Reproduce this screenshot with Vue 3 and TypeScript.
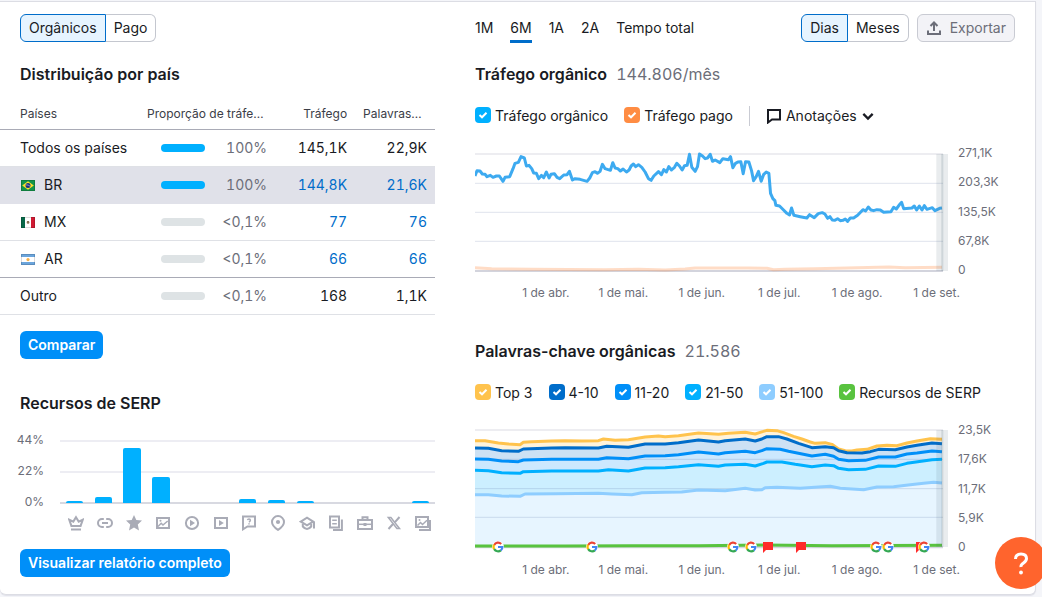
<script setup lang="ts">
import { ref } from 'vue'

type Point = [number, number]

interface CountryRow {
  name: string
  flag: string
  share: number
  shareLabel: string
  traffic: string
  keywords: string
  linked: boolean
}

interface LegendItem {
  id: string
  label: string
  color: string
}

const rows: CountryRow[] = [
  { name: 'Todos os países', flag: '', share: 100, shareLabel: '100%', traffic: '145,1K', keywords: '22,9K', linked: false },
  { name: 'BR', flag: 'br', share: 100, shareLabel: '100%', traffic: '144,8K', keywords: '21,6K', linked: true },
  { name: 'MX', flag: 'mx', share: 0, shareLabel: '<0,1%', traffic: '77', keywords: '76', linked: true },
  { name: 'AR', flag: 'ar', share: 0, shareLabel: '<0,1%', traffic: '66', keywords: '66', linked: true },
  { name: 'Outro', flag: '', share: 0, shareLabel: '<0,1%', traffic: '168', keywords: '1,1K', linked: false },
]

const source = ref('Orgânicos')
const granularity = ref('Dias')
const period = ref('6M')
const periods = ['1M', '6M', '1A', '2A', 'Tempo total']

const trafficLegend: LegendItem[] = [
  { id: 'organic', label: 'Tráfego orgânico', color: '#00b0ff' },
  { id: 'paid', label: 'Tráfego pago', color: '#ff8c43' },
]

const keywordLegend: LegendItem[] = [
  { id: 'top3', label: 'Top 3', color: '#ffc34d' },
  { id: 'k4', label: '4-10', color: '#006dca' },
  { id: 'k11', label: '11-20', color: '#008ff8' },
  { id: 'k21', label: '21-50', color: '#00b0ff' },
  { id: 'k51', label: '51-100', color: '#8ecdff' },
  { id: 'serp', label: 'Recursos de SERP', color: '#59c33f' },
]

const months = ['1 de abr.', '1 de mai.', '1 de jun.', '1 de jul.', '1 de ago.', '1 de set.']
const trafficTicks = ['271,1K', '203,3K', '135,5K', '67,8K', '0']
const keywordTicks = ['23,5K', '17,6K', '11,7K', '5,9K', '0']

const serpBars = [
  { icon: 'crown', height: 2 },
  { icon: 'link', height: 6 },
  { icon: 'star', height: 55 },
  { icon: 'image', height: 26 },
  { icon: 'play', height: 0 },
  { icon: 'video', height: 0 },
  { icon: 'question', height: 4 },
  { icon: 'pin', height: 3 },
  { icon: 'scholar', height: 2 },
  { icon: 'news', height: 0 },
  { icon: 'jobs', height: 0 },
  { icon: 'x', height: 0 },
  { icon: 'images', height: 2 },
]

const organic: Point[] = [
  [30, 108], [36, 92], [45, 93], [52, 102], [60, 103], [66, 110], [76, 106], [84, 112], [94, 108], [103, 108],
  [114, 124], [120, 112], [134, 110], [144, 86], [150, 70], [160, 67], [168, 50], [178, 54], [184, 78], [192, 76],
  [200, 86], [206, 99], [214, 100], [221, 116], [229, 106], [236, 113], [244, 96], [252, 114], [258, 103], [268, 101],
  [276, 112], [284, 116], [296, 105], [306, 104], [313, 94], [322, 120], [330, 116], [345, 118], [366, 124], [374, 114],
  [382, 98], [390, 95], [397, 100], [405, 94], [412, 73], [420, 86], [436, 91], [443, 68], [450, 84], [458, 86],
  [466, 93], [474, 87], [484, 96], [492, 90], [498, 78], [505, 72], [512, 80], [520, 74], [530, 82], [540, 96],
  [550, 116], [558, 121], [566, 108], [580, 95], [589, 104], [596, 89], [604, 96], [611, 80], [619, 90], [628, 82],
  [635, 70], [643, 78], [651, 90], [658, 77], [666, 76], [673, 43], [680, 82], [690, 94], [697, 80], [703, 42],
  [712, 48], [720, 56], [727, 54], [735, 43], [742, 64], [750, 60], [764, 68], [773, 56], [790, 59], [796, 50],
  [803, 83], [811, 70], [818, 66], [827, 65], [834, 101], [841, 65], [851, 66], [859, 92], [865, 122], [873, 110],
  [880, 94], [888, 124], [895, 104], [903, 96], [911, 100], [916, 160], [923, 176], [929, 182], [932, 196], [943, 198],
  [955, 210], [965, 220], [973, 225], [979, 204], [986, 226], [1005, 230], [1025, 234], [1033, 224], [1047, 233],
  [1059, 221], [1071, 218], [1079, 222], [1087, 235], [1094, 230], [1101, 240], [1109, 241], [1117, 236], [1125, 242],
  [1133, 241], [1140, 237], [1147, 244], [1155, 234], [1165, 234], [1177, 226], [1193, 209], [1201, 213], [1209, 201],
  [1217, 210], [1225, 212], [1235, 209], [1245, 210], [1255, 217], [1277, 215], [1285, 202], [1293, 207], [1301, 196],
  [1309, 187], [1315, 206], [1340, 204], [1347, 198], [1354, 210], [1362, 198], [1370, 210], [1377, 197], [1385, 208],
  [1401, 203], [1409, 212], [1423, 205], [1430, 204],
]

const paid: Point[] = [
  [30, 383], [80, 386], [200, 388], [420, 389], [520, 388], [600, 390], [660, 387], [690, 384], [850, 384],
  [905, 385], [925, 389], [960, 388], [1050, 386], [1270, 381], [1320, 383], [1430, 382],
]

const layers: { id: string; stroke: string; fill: string; points: Point[] }[] = [
  {
    id: 'top3', stroke: '#ffc34d', fill: '#fff3db',
    points: [
      [30, 320], [60, 320], [100, 327], [130, 330], [165, 332], [175, 325], [200, 323], [260, 321], [300, 320],
      [350, 321], [400, 320], [415, 315], [450, 319], [490, 317], [540, 309], [580, 306], [600, 308], [640, 305],
      [700, 297], [760, 301], [790, 298], [840, 295], [870, 300], [885, 295], [905, 289], [935, 290], [955, 296],
      [985, 307], [1010, 315], [1035, 324], [1050, 328], [1080, 326], [1100, 331], [1120, 345], [1140, 350],
      [1160, 351], [1175, 348], [1205, 346], [1235, 336], [1265, 334], [1295, 335], [1325, 327], [1355, 321],
      [1395, 314], [1430, 316],
    ],
  },
  {
    id: 'k4', stroke: '#006dca', fill: '#cce1f4',
    points: [
      [30, 342], [70, 343], [110, 350], [160, 352], [175, 345], [260, 342], [300, 341], [400, 342], [425, 337],
      [490, 340], [540, 330], [600, 330], [640, 326], [700, 318], [760, 324], [780, 320], [840, 315], [870, 321],
      [890, 315], [905, 308], [940, 308], [965, 315], [1000, 328], [1040, 341], [1080, 338], [1105, 341],
      [1120, 350], [1145, 356], [1190, 357], [1215, 353], [1240, 346], [1290, 347], [1325, 339], [1355, 334],
      [1400, 327], [1430, 329],
    ],
  },
  {
    id: 'k11', stroke: '#008ff8', fill: '#cce8fe',
    points: [
      [30, 375], [70, 376], [110, 381], [160, 383], [175, 378], [260, 376], [400, 376], [425, 371], [490, 374],
      [540, 366], [600, 365], [640, 362], [700, 354], [760, 360], [780, 356], [840, 352], [870, 356], [890, 350],
      [905, 344], [945, 346], [970, 352], [1040, 366], [1080, 361], [1105, 367], [1120, 376], [1150, 380],
      [1200, 379], [1240, 369], [1290, 369], [1325, 360], [1355, 357], [1400, 351], [1430, 353],
    ],
  },
  {
    id: 'k21', stroke: '#00b0ff', fill: '#ccefff',
    points: [
      [30, 409], [70, 410], [110, 416], [165, 418], [175, 413], [260, 411], [400, 411], [430, 407], [490, 411],
      [540, 402], [600, 401], [640, 398], [700, 392], [760, 397], [780, 393], [840, 391], [870, 396], [895, 388],
      [905, 384], [950, 384], [990, 391], [1040, 398], [1080, 393], [1105, 395], [1120, 403], [1150, 407],
      [1200, 406], [1240, 396], [1290, 397], [1325, 388], [1400, 377], [1430, 376],
    ],
  },
  {
    id: 'k51', stroke: '#8ecdff', fill: '#e7f5ff',
    points: [
      [30, 482], [70, 482], [110, 486], [165, 487], [180, 480], [270, 479], [400, 478], [440, 480], [500, 482],
      [530, 476], [600, 475], [650, 474], [700, 468], [780, 470], [840, 463], [870, 468], [890, 467], [900, 461],
      [935, 460], [1005, 463], [1060, 459], [1095, 457], [1125, 463], [1195, 467], [1235, 459], [1285, 458],
      [1335, 452], [1375, 448], [1405, 445], [1430, 447],
    ],
  },
]

const serpLine: Point[] = [[30, 636], [300, 636], [500, 635], [700, 635], [900, 633], [1100, 635], [1430, 634]]

// Notes on the keyword timeline; `at` is the share of the plot width.
const notes = [
  { kind: 'google', at: 4.9 },
  { kind: 'google', at: 24.8 },
  { kind: 'google', at: 54.5 },
  { kind: 'google', at: 58.3 },
  { kind: 'flag', at: 62 },
  { kind: 'flag', at: 69 },
  { kind: 'google', at: 84.7 },
  { kind: 'google', at: 87.4 },
  { kind: 'flag', at: 94.3 },
  { kind: 'google', at: 95 },
]

const line = (points: Point[]): string => points.map((p) => p.join(',')).join(' ')
const area = (points: Point[]): string => `30,638 ${line(points)} 1430,638`
</script>

<template>
  <main class="panel">
    <section class="left">
      <div class="inset toggle" role="group" aria-label="Tipo de tráfego">
        <button v-for="s in ['Orgânicos', 'Pago']" :key="s" type="button" :aria-pressed="source === s" @click="source = s">{{ s }}</button>
      </div>

      <h2 class="inset">Distribuição por país</h2>
      <table>
        <colgroup>
          <col class="c-name" /><col class="c-share" /><col class="c-traffic" /><col class="c-keywords" />
        </colgroup>
        <thead>
          <tr>
            <th>Países</th>
            <th>Proporção de tráfego</th>
            <th class="num">Tráfego</th>
            <th class="num">Palavras-chave</th>
          </tr>
        </thead>
        <tbody>
          <tr v-for="r in rows" :key="r.name" :class="{ selected: r.name === 'BR', strong: r.name === 'AR' }">
            <td>
              <span class="country">
                <svg v-if="r.flag === 'br'" class="flag" viewBox="0 0 14 11">
                  <rect width="14" height="11" fill="#12954a" />
                  <path d="M7 1.2 12.8 5.5 7 9.8 1.2 5.5z" fill="#ffdf2b" />
                  <circle cx="7" cy="5.5" r="2.5" fill="#1d2f7c" />
                  <path d="M4.8 4.9q2.4-.4 4.4 1.4" fill="none" stroke="#cfd8e8" stroke-width=".6" />
                  <rect x=".5" y=".5" width="13" height="10" fill="none" stroke="#000" stroke-opacity=".16" />
                </svg>
                <svg v-else-if="r.flag === 'mx'" class="flag" viewBox="0 0 14 11">
                  <rect width="14" height="11" fill="#fff" />
                  <rect width="4" height="11" fill="#086848" />
                  <rect x="10" width="4" height="11" fill="#d01a33" />
                  <path d="M6 4h2l.5 2L7 7 5.6 6z" fill="#8b7355" />
                  <rect x=".5" y=".5" width="13" height="10" fill="none" stroke="#000" stroke-opacity=".14" />
                </svg>
                <svg v-else-if="r.flag === 'ar'" class="flag" viewBox="0 0 14 11">
                  <rect width="14" height="11" fill="#fff" />
                  <rect width="14" height="3" fill="#6ba5dc" />
                  <rect y="8" width="14" height="3" fill="#6ba5dc" />
                  <circle cx="7" cy="5.6" r="1.6" fill="#f5b04a" />
                  <rect x=".5" y=".5" width="13" height="10" fill="none" stroke="#000" stroke-opacity=".14" />
                </svg>
                {{ r.name }}
              </span>
            </td>
            <td>
              <span class="share">
                <span class="meter"><span class="meter-fill" :style="{ width: r.share + '%' }"></span></span>
                <span class="share-label">{{ r.shareLabel }}</span>
              </span>
            </td>
            <td class="num"><a v-if="r.linked" href="#">{{ r.traffic }}</a><template v-else>{{ r.traffic }}</template></td>
            <td class="num"><a v-if="r.linked" href="#">{{ r.keywords }}</a><template v-else>{{ r.keywords }}</template></td>
          </tr>
        </tbody>
      </table>
      <div class="inset action"><button type="button" class="primary">Comparar</button></div>

      <h2 class="inset serp-title">Recursos de SERP</h2>
      <div class="serp">
        <div class="serp-axis"><span>44%</span><span>22%</span><span>0%</span></div>
        <div class="serp-body">
          <div class="serp-plot">
            <span v-for="b in serpBars" :key="b.icon" class="bar" :style="{ height: b.height + 'px' }"></span>
          </div>
          <div class="serp-icons">
            <svg v-for="b in serpBars" :key="b.icon" viewBox="0 0 16 16" class="icon">
              <template v-if="b.icon === 'crown'">
                <path d="M8 2.2 10.7 6.6 14.8 4.6 12.6 10.9H3.4L1.2 4.6 5.3 6.6z" class="o" />
                <path d="M3 14.5h10" class="o" />
              </template>
              <template v-else-if="b.icon === 'link'">
                <path d="M6.8 4H5a4 4 0 0 0 0 8h1.8M9.2 4H11a4 4 0 0 1 0 8H9.2M5 8h6" class="o" />
              </template>
              <path v-else-if="b.icon === 'star'" d="M8 0 10.3 5 16 5.6 11.8 9.4 13 15.5 8 12.5 3 15.5 4.2 9.4 0 5.6 5.7 5z" class="f" />
              <template v-else-if="b.icon === 'image'">
                <rect x="2" y="3" width="12" height="10" class="o" />
                <path d="M3 11.500 6.200 8.200 8 10 12.700 6" class="mid" /><circle cx="5.500" cy="5.800" r="1" class="f" />
              </template>
              <template v-else-if="b.icon === 'play'">
                <circle cx="8" cy="8" r="6.1" class="o" /><path d="M6 4.8 11 8 6 11.2z" class="f" />
              </template>
              <template v-else-if="b.icon === 'video'">
                <rect x="2" y="3" width="12" height="10" class="o" /><path d="M6 5 10.8 8 6 11z" class="f" />
              </template>
              <template v-else-if="b.icon === 'question'">
                <path d="M2 1.5h12v10H6.5L2 14.3z" class="o" />
                <path d="M6.500 5.200Q6.700 4 8 4q1.400 0 1.400 1.200Q9.400 6 8 7.200M8 8.300v1.200" class="mid" />
              </template>
              <template v-else-if="b.icon === 'pin'">
                <path d="M8 1.1a6 6 0 0 1 6 6c0 3-2.5 5.6-6 7.8-3.5-2.2-6-4.8-6-7.8a6 6 0 0 1 6-6z" class="o" />
                <circle cx="8" cy="7" r="2.1" class="f" />
              </template>
              <template v-else-if="b.icon === 'scholar'">
                <path d="M1.800 6.600 8 2.600 14.200 6.600 8 10.400z" class="o" />
                <path d="M15 7v6.500M3.800 9v2.500Q8 16.500 12.200 11.500V9" class="o" />
              </template>
              <template v-else-if="b.icon === 'news'">
                <path d="M2 1.500h9v11H2zM13.900 4.500v10.400H5" class="o" />
                <path d="M4.200 5.300h4.600M4.200 8.700h4.600" class="mid" />
              </template>
              <template v-else-if="b.icon === 'jobs'">
                <path d="M1 5h14v9H1zM5.500 5V2.200h5V5" class="o" />
                <path d="M1 9.300h14" class="mid" /><rect x="6.500" y="8" width="3" height="3" class="f" />
              </template>
              <template v-else-if="b.icon === 'x'">
                <path d="M2.300 2.500h2.600l8.600 11h-2.600z" class="mid" />
                <path d="M13.500 2 9 7.200M7 9 2.500 14" class="o" />
              </template>
              <template v-else>
                <path d="M1 2h12v10H1zM15 5v9.900H4" class="o" />
                <path d="M2.500 10.500 5.500 7.500 7.500 9.500 12 5.300" class="mid" /><circle cx="4.500" cy="5" r="1" class="f" />
              </template>
            </svg>
          </div>
        </div>
      </div>
      <div class="inset report"><button type="button" class="primary">Visualizar relatório completo</button></div>
    </section>

    <section class="right">
      <div class="toolbar">
        <nav class="periods" aria-label="Período">
          <button v-for="p in periods" :key="p" type="button" :class="{ active: period === p }" @click="period = p">{{ p }}</button>
        </nav>
        <div class="toggle" role="group" aria-label="Granularidade">
          <button v-for="g in ['Dias', 'Meses']" :key="g" type="button" :aria-pressed="granularity === g" @click="granularity = g">{{ g }}</button>
        </div>
        <button type="button" class="export">
          <svg viewBox="0 0 16 16" class="export-icon"><path d="M8 11V2.500M4.500 6 8 2.500 11.500 6M2 10.500V14h12v-3.500" /></svg>
          Exportar
        </button>
      </div>

      <h2>Tráfego orgânico <span class="figure">144.806/mês</span></h2>
      <div class="legend">
        <label v-for="l in trafficLegend" :key="l.id"><input type="checkbox" checked :style="{ backgroundColor: l.color }" />{{ l.label }}</label>
        <button type="button" class="annotations">
          <svg viewBox="0 0 16 16" class="note-icon"><path d="M2 2h12v9.500H6L2 14.500z" /></svg>
          Anotações
          <svg viewBox="0 0 12 12" class="chevron"><path d="M2 4.200 6 8.200 10 4.200" /></svg>
        </button>
      </div>
      <div class="chart">
        <div class="plot">
          <svg viewBox="30 15 1418 399" preserveAspectRatio="none" role="img" aria-label="Tráfego orgânico por dia">
            <path d="M30 42H1433" class="edge light" />
            <path d="M30 130H1433M30 217H1433M30 304H1433" class="rule" />
            <path d="M30 393H1433" class="edge" />
            <polyline :points="line(paid)" class="paid" />
            <polyline :points="line(organic)" class="organic" />
            <rect x="1413" y="42" width="35" height="351" class="band" />
            <rect x="1428" y="42" width="6" height="351" class="band-core" />
          </svg>
        </div>
        <div class="ticks"><span v-for="t in trafficTicks" :key="t">{{ t }}</span></div>
      </div>
      <div class="months"><span v-for="m in months" :key="m">{{ m }}</span></div>

      <h2 class="keywords-title">Palavras-chave orgânicas <span class="figure">21.586</span></h2>
      <div class="legend">
        <label v-for="l in keywordLegend" :key="l.id"><input type="checkbox" checked :style="{ backgroundColor: l.color }" />{{ l.label }}</label>
      </div>
      <div class="chart">
        <div class="plot">
          <svg viewBox="30 264 1418 399" preserveAspectRatio="none" role="img" aria-label="Palavras-chave orgânicas por posição">
            <path d="M30 288H1433" class="edge light" />
            <polygon v-for="l in layers" :key="l.id" :points="area(l.points)" :fill="l.fill" />
            <path d="M30 376H1433M30 464H1433M30 550H1433" class="rule" />
            <path d="M30 640H1433" class="edge" />
            <polyline v-for="l in layers" :key="l.id" :points="line(l.points)" :stroke="l.stroke" class="series" />
            <polyline :points="line(serpLine)" class="serp-line" />
            <rect x="1413" y="288" width="35" height="351" class="band" />
            <rect x="1428" y="288" width="6" height="351" class="band-core" />
          </svg>
          <svg v-for="n in notes" :key="n.at" viewBox="0 0 12 12" class="note" :style="{ left: n.at + '%' }">
            <template v-if="n.kind === 'google'">
              <circle cx="6" cy="6" r="6" fill="#fff" />
              <g fill="none" stroke-width="2.2">
                <path d="M9.2 2.900A4.400 4.400 0 0 0 2.200 3.900" stroke="#ea4335" />
                <path d="M2.200 3.800a4.400 4.400 0 0 0 0 4.400" stroke="#fbbc05" />
                <path d="M2.200 8.100A4.400 4.400 0 0 0 8.900 9.300" stroke="#34a853" />
                <path d="M8.800 9.400A4.400 4.400 0 0 0 10.400 6H6" stroke="#4285f4" />
              </g>
            </template>
            <path v-else d="M1 1h10v8H4l-3 3z" fill="#ff2b2b" />
          </svg>
        </div>
        <div class="ticks"><span v-for="t in keywordTicks" :key="t">{{ t }}</span></div>
      </div>
      <div class="months"><span v-for="m in months" :key="m">{{ m }}</span></div>
    </section>

    <button type="button" class="help" aria-label="Ajuda">
      <svg viewBox="0 0 26 26"><path d="M7.500 9Q7.500 4 13 4t5.500 4.600Q18.500 11 15.500 13T13 17" /><circle cx="13" cy="22.500" r="1.900" /></svg>
    </button>
  </main>
</template>

<style>
body {
  background: #f4f5f9;
}
</style>

<style scoped>
.panel {
  display: grid;
  grid-template-columns: minmax(0, 435fr) minmax(0, 540fr);
  column-gap: 40px;
  margin: 1px 6px 2px 0;
  padding: 12px 20px 16px 0;
  background: #fff;
  border: 1px solid #dcdde4;
  border-left: 0;
  border-radius: 0 0 6px 6px;
  box-shadow: 0 1px 1px #e0e1e9;
  color: #191b23;
  font: 14px/20px Inter, "Liberation Sans", sans-serif;
}

.inset {
  margin-left: 20px;
}

button {
  font: inherit;
  color: inherit;
  cursor: pointer;
}

h2 {
  margin: 20px 0 0;
  font-size: 16px;
  line-height: 24px;
  font-weight: 600;
}

.left h2 {
  margin-left: 20px;
}

.figure {
  margin-left: 5px;
  color: #6c6e79;
  font-weight: 400;
  font-variant-numeric: tabular-nums;
}

.toggle {
  display: flex;
}

.toggle button {
  height: 28px;
  padding: 0 8px;
  background: #fff;
  border: 1px solid #c4c7cf;
}

.toggle button:first-child {
  border-radius: 6px 0 0 6px;
}

.toggle button:last-child {
  border-left: 0;
  border-radius: 0 6px 6px 0;
}

.toggle button[aria-pressed="true"] {
  background: #e6f4ff;
  border: 1px solid #006dca;
}

table {
  width: 100%;
  margin-top: 12px;
  table-layout: fixed;
  border-collapse: separate;
  border-spacing: 0;
}

.c-name {
  width: 33.8%;
}

.c-share {
  width: 27.6%;
}

.c-traffic {
  width: 18.4%;
}

.c-keywords {
  width: 20.2%;
}

th {
  height: 31px;
  padding: 0;
  border-bottom: 1px solid #a9abb6;
  font-size: 12px;
  line-height: 16px;
  font-weight: 400;
  text-align: left;
  overflow: hidden;
  text-overflow: ellipsis;
  white-space: nowrap;
  color: #3b3d47;
}

td {
  height: 36px;
  padding: 0;
  border-bottom: 1px solid #dfe1e6;
}

th:first-child,
td:first-child {
  padding-left: 20px;
}

th.num,
td.num {
  text-align: right;
}

td.num {
  font-variant-numeric: tabular-nums;
}

th:last-child,
td:last-child {
  padding-right: 8px;
  padding-left: 16px;
}

.selected td {
  background: #e0e1e9;
  border-color: #e0e1e9;
}

.strong td {
  border-color: #a9abb6;
}

td a {
  color: #006dca;
  text-decoration: none;
}

.country {
  display: flex;
  align-items: center;
  gap: 9px;
}

.flag {
  width: 14px;
  height: 11px;
  margin-left: 1px;
}

.share {
  display: flex;
  align-items: center;
  justify-content: space-between;
  padding-left: 14px;
}

.meter {
  width: 44px;
  height: 8px;
  border-radius: 4px;
  background: #dee3e5;
  overflow: hidden;
}

.meter-fill {
  display: block;
  height: 100%;
  background: #00b0ff;
}

.share-label {
  color: #6c6e79;
  font-variant-numeric: tabular-nums;
}

.action {
  margin-top: 16px;
}

.primary {
  display: block;
  height: 28px;
  padding: 0 8px;
  border: 0;
  border-radius: 6px;
  background: #008ff8;
  color: #fff;
  font-weight: 600;
}

.serp-title {
  margin-top: 32px;
}

.serp {
  display: flex;
  gap: 16px;
  margin-top: 17px;
}

.serp-axis {
  display: flex;
  flex-direction: column;
  justify-content: space-between;
  width: 44px;
  height: 78px;
  color: #6c6e79;
  font-size: 12px;
  line-height: 16px;
  text-align: right;
}

.serp-body {
  flex: 1;
  padding-top: 8px;
}

.serp-plot,
.serp-icons {
  display: grid;
  grid-template-columns: repeat(13, 1fr);
  justify-items: center;
}

.serp-plot {
  height: 63px;
  padding-bottom: 1px;
  align-items: end;
  background:
    linear-gradient(#ededf3, #ededf3) 0 0 / 100% 2px no-repeat,
    linear-gradient(#ededf3, #ededf3) 0 31px / 100% 2px no-repeat,
    linear-gradient(#d8d9e1, #d8d9e1) 0 62px / 100% 2px no-repeat;
}

.bar {
  width: 60%;
  border-radius: 2px 2px 0 0;
  background: #00b0ff;
}

.serp-icons {
  margin: 11px -2px 0 2px;
}

.icon {
  width: 16px;
  height: 16px;
}

.icon .o {
  fill: none;
  stroke: #a9abb6;
  stroke-width: 2;
}

.icon .mid {
  fill: none;
  stroke: #a9abb6;
  stroke-width: 1.5;
}

.icon .f {
  fill: #a9abb6;
}

.report {
  margin-top: 18px;
}

.toolbar {
  display: flex;
  gap: 8px;
  height: 28px;
}

.periods {
  display: flex;
  flex: 1;
  gap: 17px;
}

.periods button {
  height: 29px;
  padding: 2px 0 0;
  border: 0;
  border-bottom: 3px solid transparent;
  background: none;
}

.periods .active {
  border-bottom-color: #006dca;
}

.export {
  display: flex;
  align-items: center;
  gap: 8px;
  height: 28px;
  padding: 0 8px;
  border: 1px solid #c9cbd3;
  border-radius: 6px;
  background: #f3f3f7;
  color: #6c6e79;
}

.export-icon {
  width: 16px;
  height: 16px;
  fill: none;
  stroke: #6c6e79;
  stroke-width: 2;
}

.legend {
  display: flex;
  align-items: center;
  gap: 16px;
  height: 20px;
  margin-top: 20px;
}

.legend label {
  display: flex;
  align-items: center;
  gap: 4px;
  white-space: nowrap;
}

.legend input {
  appearance: none;
  width: 16px;
  height: 16px;
  margin: 0 0 2px;
  border-radius: 4px;
  background: url("data:image/svg+xml,%3Csvg xmlns='http://www.w3.org/2000/svg' viewBox='0 0 16 16'%3E%3Cpath d='M4.500 8 7 10.300 11.500 5.800' fill='none' stroke='white' stroke-width='2'/%3E%3C/svg%3E") center / 16px 16px no-repeat;
}

.annotations {
  display: flex;
  align-items: center;
  gap: 4px;
  padding: 0 0 0 16px;
  border: 0;
  border-left: 1px solid #c9cbd3;
  background: none;
}

.note-icon {
  width: 16px;
  height: 16px;
  fill: none;
  stroke: #191b23;
  stroke-width: 2;
}

.chevron {
  width: 14px;
  height: 14px;
  fill: none;
  stroke: #191b23;
  stroke-width: 2;
}

.chart {
  display: flex;
  gap: 10px;
  margin-top: 19px;
}

.plot {
  position: relative;
  flex: 1;
  height: 133px;
}

.plot > svg:first-child {
  display: block;
  width: 100%;
  height: 100%;
}

.plot > svg:first-child path,
.plot polyline {
  vector-effect: non-scaling-stroke;
}

.rule {
  stroke: #1e3c78;
  stroke-opacity: 0.14;
  stroke-width: 1;
}

.edge {
  stroke: #d3d4dd;
  stroke-width: 2;
}

.edge.light {
  stroke: #ededf1;
}

.organic,
.paid,
.series,
.serp-line {
  fill: none;
  stroke-width: 3;
  stroke-linejoin: round;
}

.organic {
  stroke: #3daaf0;
}

.paid {
  stroke: #ff8c43;
  stroke-opacity: 0.3;
}

.serp-line {
  stroke: #59c33f;
}

.band {
  fill: #55707a;
  fill-opacity: 0.13;
}

.band-core {
  fill: #55707a;
  fill-opacity: 0.18;
}

.note {
  position: absolute;
  top: 119px;
  width: 12px;
  height: 12px;
  margin-left: -6px;
}

.ticks {
  display: flex;
  flex-direction: column;
  justify-content: space-between;
  width: 57px;
  color: #6c6e79;
  font-size: 12px;
  line-height: 16px;
}

.months {
  display: grid;
  grid-template-columns: 77fr 78fr 79fr 76fr 80fr 79fr;
  margin-top: 7px;
  padding: 0 7.2% 0 6%;
  color: #6c6e79;
  font-size: 12px;
  line-height: 16px;
  text-align: center;
  white-space: nowrap;
}

.keywords-title {
  margin-top: 38px;
}

.help {
  position: fixed;
  right: -5px;
  bottom: 8px;
  display: flex;
  align-items: center;
  justify-content: center;
  width: 52px;
  height: 52px;
  padding: 0;
  border: 0;
  border-radius: 50%;
  background: #ff642d;
}

.help svg {
  width: 26px;
  height: 26px;
  fill: #fff;
}

.help path {
  fill: none;
  stroke: #fff;
  stroke-width: 3;
}
</style>
